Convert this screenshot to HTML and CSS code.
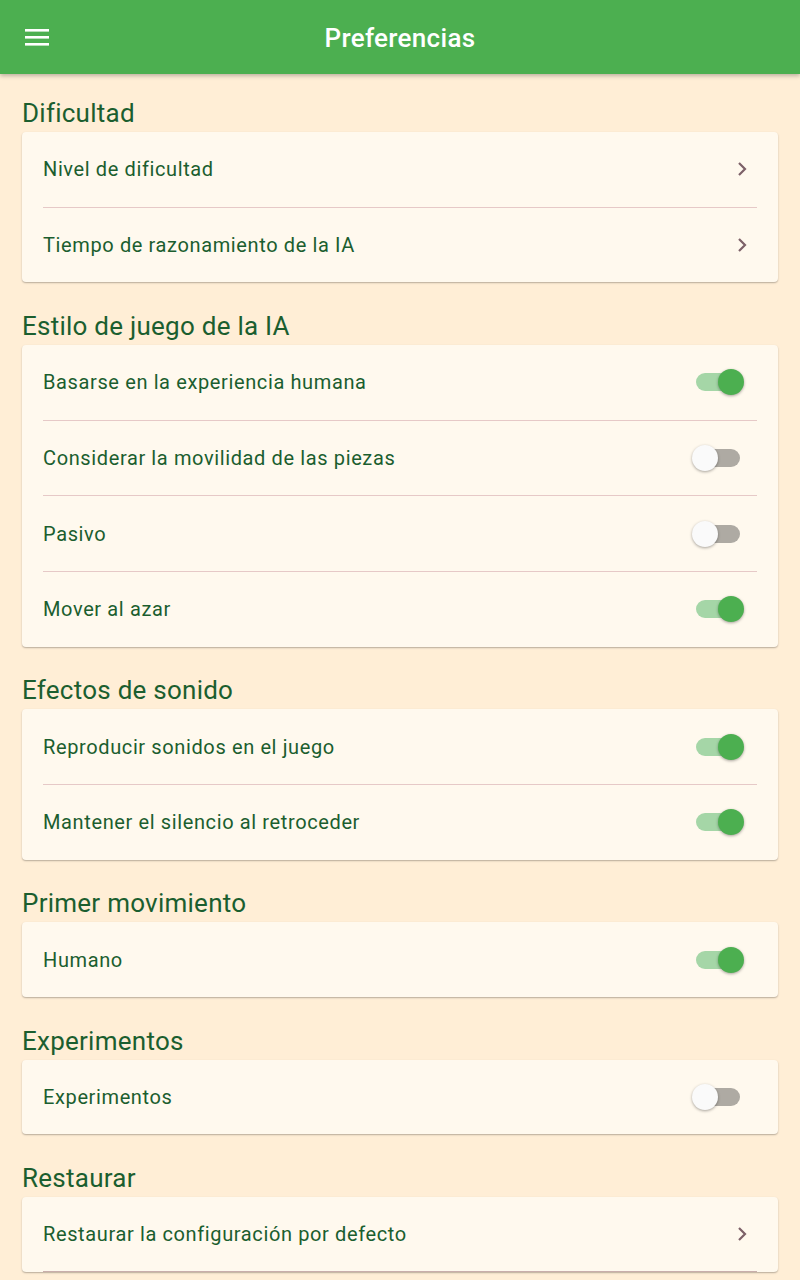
FILE: index.html
```html
<!DOCTYPE html>
<html lang="es">
<head>
<meta charset="utf-8">
<title>Preferencias</title>
<link rel="stylesheet" href="styles.css">
</head>
<body>
<header class="appbar">
  <svg class="menu" width="24" height="18" viewBox="0 0 24 18"><rect x="0" y="1" width="24" height="2.6" fill="#fff"/><rect x="0" y="8" width="24" height="2.6" fill="#fff"/><rect x="0" y="15" width="24" height="2.6" fill="#fff"/></svg>
  <h1 class="title">Preferencias</h1>
</header>
<main class="content">
  <h2 class="section first">Dificultad</h2>
  <div class="card">
    <div class="row"><span class="label">Nivel de dificultad</span><svg class="chev" width="10" height="16" viewBox="0 0 10 16"><path d="M2 2l6 6-6 6" fill="none" stroke="#7d6168" stroke-width="2.2"/></svg></div>
    <div class="row"><span class="label">Tiempo de razonamiento de la IA</span><svg class="chev" width="10" height="16" viewBox="0 0 10 16"><path d="M2 2l6 6-6 6" fill="none" stroke="#7d6168" stroke-width="2.2"/></svg></div>
  </div>

  <h2 class="section">Estilo de juego de la IA</h2>
  <div class="card">
    <div class="row"><span class="label">Basarse en la experiencia humana</span><span class="switch on"><span class="thumb"></span></span></div>
    <div class="row"><span class="label">Considerar la movilidad de las piezas</span><span class="switch"><span class="thumb"></span></span></div>
    <div class="row"><span class="label">Pasivo</span><span class="switch"><span class="thumb"></span></span></div>
    <div class="row"><span class="label">Mover al azar</span><span class="switch on"><span class="thumb"></span></span></div>
  </div>

  <h2 class="section">Efectos de sonido</h2>
  <div class="card">
    <div class="row"><span class="label">Reproducir sonidos en el juego</span><span class="switch on"><span class="thumb"></span></span></div>
    <div class="row"><span class="label">Mantener el silencio al retroceder</span><span class="switch on"><span class="thumb"></span></span></div>
  </div>

  <h2 class="section">Primer movimiento</h2>
  <div class="card">
    <div class="row"><span class="label">Humano</span><span class="switch on"><span class="thumb"></span></span></div>
  </div>

  <h2 class="section">Experimentos</h2>
  <div class="card">
    <div class="row"><span class="label">Experimentos</span><span class="switch"><span class="thumb"></span></span></div>
  </div>

  <h2 class="section">Restaurar</h2>
  <div class="card">
    <div class="row last-line"><span class="label">Restaurar la configuración por defecto</span><svg class="chev" width="10" height="16" viewBox="0 0 10 16"><path d="M2 2l6 6-6 6" fill="none" stroke="#7d6168" stroke-width="2.2"/></svg></div>
  </div>
</main>
</body>
</html>
```

FILE: styles.css
```css
* { box-sizing: border-box; }
html, body { margin: 0; padding: 0; }
body {
  background: #ffeed6;
  font-family: Roboto, "Noto Sans", "Liberation Sans", sans-serif;
  color: #1b5e2f;
  height: 1280px;
  overflow: hidden;
}
.appbar {
  position: relative;
  z-index: 2;
  height: 74px;
  background: #4caf50;
  display: flex;
  align-items: center;
  justify-content: center;
  box-shadow: 0 2px 4px rgba(0,0,0,0.25);
}
.menu {
  position: absolute;
  left: 25px;
  top: 28px;
}
.title {
  margin: 2px 0 0 0;
  color: #fff;
  font-size: 26px;
  font-weight: 500;
  letter-spacing: 0.3px;
}
.content {
  padding: 0 22px;
}
.section {
  margin: 28.6px 0 4px 0;
  height: 30px;
  line-height: 30px;
  font-size: 26px;
  font-weight: 400;
  letter-spacing: 0.25px;
  color: #1b5e2f;
}
.section.first { margin-top: 24px; }
.card {
  background: #fff9ee;
  border-radius: 4px;
  box-shadow: 0 1px 2px rgba(0,0,0,0.22), 0 1px 1px rgba(0,0,0,0.08);
  padding: 0 21px 0 21px;
}
.row {
  box-sizing: content-box;
  height: 74.7px;
  display: flex;
  align-items: center;
  justify-content: space-between;
  border-top: 1px solid #e6c9c7;
}
.row:first-child { border-top: none; }
.row.last-line { box-sizing: border-box; height: 75px; border-bottom: 1px solid #c9aeab; }
.label {
  font-size: 20px;
  letter-spacing: 0.62px;
  color: #1b5e2f;
}
.chev { margin-right: 10px; }
.switch {
  position: relative;
  width: 44px;
  height: 18px;
  border-radius: 9px;
  background: #aeaaa3;
  margin-right: 17px;
}
.switch.on { background: #a5d6a7; }
.thumb {
  position: absolute;
  top: -4px;
  left: -4px;
  width: 26px;
  height: 26px;
  border-radius: 50%;
  background: #fafafa;
  box-shadow: 0 1px 3px rgba(0,0,0,0.35);
}
.switch.on .thumb {
  left: 22px;
  background: #4caf50;
}
```
